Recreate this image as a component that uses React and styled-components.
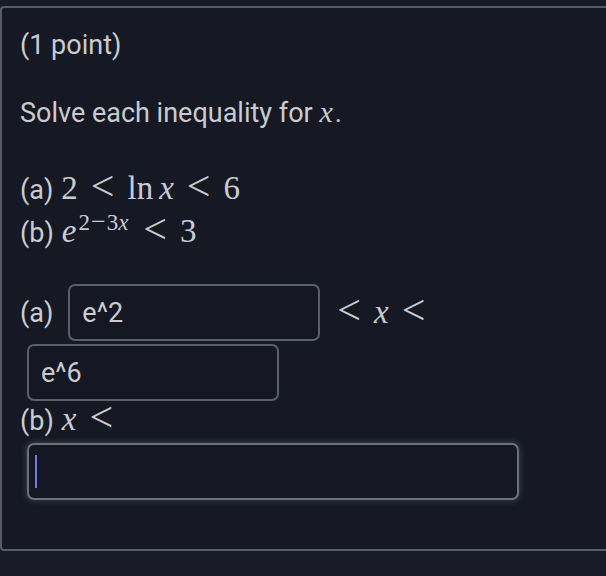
import styled, { createGlobalStyle } from 'styled-components';

const GlobalStyle = createGlobalStyle`
	html, body {
		margin: 0;
		padding: 0;
		background: #181a25;
		overflow: hidden;
	}
	body {
		font-family: Roboto, 'Liberation Sans', sans-serif;
		color: #c9cbd2;
	}
`;

const Card = styled.div`
	margin-top: 6px;
	width: calc(100% + 20px);
	height: 545px;
	box-sizing: border-box;
	background: #161923;
	border: 2px solid #585c68;
	border-radius: 4px;
	padding: 19px 18px;
`;

const Text = styled.p`
	margin: 0 0 ${(p) => p.$gap || 0}px;
	font-size: 27px;
	line-height: 36px;
`;

const Line = styled.div`
	display: flex;
	align-items: baseline;
	font-size: 27px;
	height: ${(p) => p.$lh || 43}px;
	line-height: ${(p) => p.$lh || 43}px;
`;

const Math = styled.span`
	font-family: 'Liberation Serif', 'DejaVu Serif', serif;
	font-size: ${(p) => p.$fs || 33}px;
	line-height: 1;
	white-space: pre;
	margin-left: ${(p) => p.$ml || 0}px;
`;

const V = styled.i`
	font-style: italic;
	margin: 0 ${(p) => p.$mr || 0}px 0 ${(p) => p.$ml || 0}px;
`;

const Rel = styled.span`
	display: inline-block;
	font-size: ${(p) => p.$fs || 42}px;
	line-height: 0;
	vertical-align: ${(p) => p.$va ?? -1}px;
	margin: 0 ${(p) => p.$m ?? 13}px;
`;

const Sup = styled.span`
	display: inline-block;
	font-size: 23px;
	line-height: 0;
	vertical-align: 12px;
	margin-left: 2px;
	margin-right: 2px;
`;

const AnswerRow = styled.div`
	display: flex;
	align-items: center;
	font-size: 27px;
	margin-top: ${(p) => p.$mt || 0}px;
`;

const Box = styled.div`
	width: ${(p) => p.$w}px;
	height: 57px;
	box-sizing: border-box;
	border: 2px solid ${(p) => (p.$focus ? '#6c707c' : '#5b5f6b')};
	border-radius: 7px;
	background: #151822;
	box-shadow: ${(p) => (p.$focus ? '0 0 6px 1px rgba(120,125,140,0.35)' : 'none')};
	display: flex;
	align-items: center;
	padding-left: 12px;
	font-size: 27px;
	color: #c9cbd2;
	margin-left: ${(p) => p.$ml || 0}px;
`;

const Caret = styled.span`
	display: block;
	width: 2px;
	height: 33px;
	background: #6f7ae0;
	margin-left: -6px;
`;

export default function App() {
	return (
		<>
			<GlobalStyle />
			<Card>
				<Text $gap={32}>(1 point)</Text>
				<Text $gap={38}>
					Solve each inequality for <Math $fs={30}><V $mr={2}>x</V></Math>.
				</Text>
				<Line>
					(a)
					<Math $ml={8}>
						2<Rel>&lt;</Rel>ln<V $ml={6}>x</V>
						<Rel>&lt;</Rel>6
					</Math>
				</Line>
				<Line>
					(b)
					<Math $ml={8}>
						<V>e</V>
						<Sup>
							2<Rel $m={1} $fs={26} $va={0}>−</Rel>3<V>x</V>
						</Sup>
						<Rel>&lt;</Rel>3
					</Math>
				</Line>
				<AnswerRow $mt={29}>
					(a)
					<Box $w={252} $ml={15}>e^2</Box>
					<Math $ml={4}>
						<Rel>&lt;</Rel>
						<V>x</V>
						<Rel>&lt;</Rel>
					</Math>
				</AnswerRow>
				<AnswerRow $mt={3}>
					<Box $w={252} $ml={7}>e^6</Box>
				</AnswerRow>
				<Line $lh={40}>
					(b)
					<Math $ml={8}>
						<V>x</V>
						<Rel>&lt;</Rel>
					</Math>
				</Line>
				<AnswerRow $mt={2}>
					<Box $w={492} $ml={7} $focus>
						<Caret />
					</Box>
				</AnswerRow>
			</Card>
		</>
	);
}
